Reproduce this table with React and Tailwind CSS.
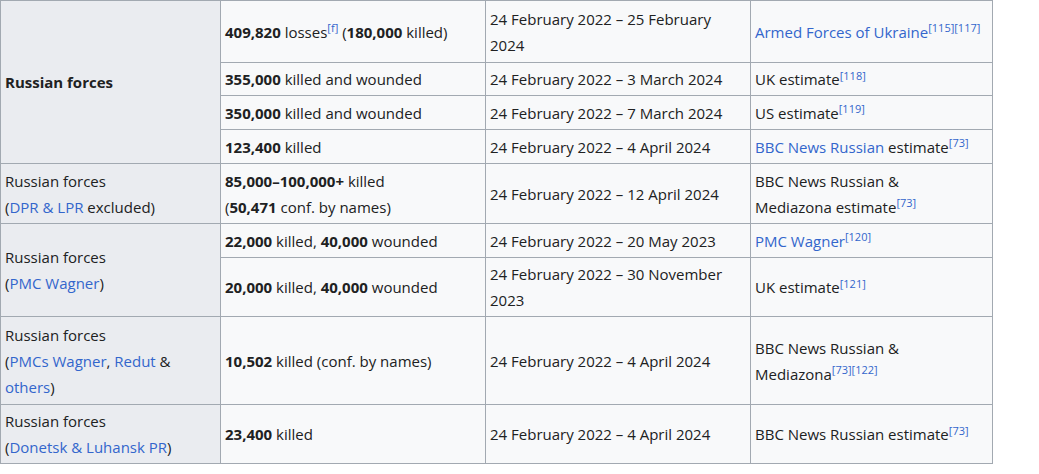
import React from 'react';

const A = ({ children }) => <span className="text-[#3366cc]">{children}</span>;
const Ref = ({ children }) => (
  <sup className="text-[11px] leading-none text-[#3366cc]">{children}</sup>
);
const B = ({ children }) => <b className="font-bold">{children}</b>;

const cell = 'border border-[#a2a9b1] px-[4px] py-0 text-left align-middle';
const th = cell + ' bg-[#eaecf0] font-normal';
const thBold = cell + ' bg-[#eaecf0] font-bold';
const td = cell + ' bg-[#f8f9fa]';

export default function App() {
  return (
    <div className="bg-white w-[1039px] h-[474px] text-[#202122] text-[15px] leading-[26px]" style={{ fontFamily: '"Open Sans", "Noto Sans", sans-serif' }}>
      <table className="border-collapse border border-[#a2a9b1] table-fixed w-[993px]">
        <colgroup>
          <col className="w-[220px]" />
          <col className="w-[265px]" />
          <col className="w-[265px]" />
          <col className="w-[242px]" />
        </colgroup>
        <tbody>
          <tr className="h-[62px]">
            <th rowSpan={4} className={thBold}>Russian forces</th>
            <td className={td}><B>409,820</B> losses<Ref>[f]</Ref> (<B>180,000</B> killed)</td>
            <td className={td}>24 February 2022 – 25 February<br />2024</td>
            <td className={td}><A>Armed Forces of Ukraine</A><Ref>[115][117]</Ref></td>
          </tr>
          <tr className="h-[33px]">
            <td className={td}><B>355,000</B> killed and wounded</td>
            <td className={td}>24 February 2022 – 3 March 2024</td>
            <td className={td}>UK estimate<Ref>[118]</Ref></td>
          </tr>
          <tr className="h-[34px]">
            <td className={td}><B>350,000</B> killed and wounded</td>
            <td className={td}>24 February 2022 – 7 March 2024</td>
            <td className={td}>US estimate<Ref>[119]</Ref></td>
          </tr>
          <tr className="h-[34px]">
            <td className={td}><B>123,400</B> killed</td>
            <td className={td}>24 February 2022 – 4 April 2024</td>
            <td className={td}><A>BBC News Russian</A> estimate<Ref>[73]</Ref></td>
          </tr>
          <tr className="h-[60px]">
            <th className={th}>Russian forces<br />(<A>DPR &amp; LPR</A> excluded)</th>
            <td className={td}><B>85,000–100,000+</B> killed<br />(<B>50,471</B> conf. by names)</td>
            <td className={td}>24 February 2022 – 12 April 2024</td>
            <td className={td}>BBC News Russian &amp;<br />Mediazona estimate<Ref>[73]</Ref></td>
          </tr>
          <tr className="h-[34px]">
            <th rowSpan={2} className={th}>Russian forces<br />(<A>PMC Wagner</A>)</th>
            <td className={td}><B>22,000</B> killed, <B>40,000</B> wounded</td>
            <td className={td}>24 February 2022 – 20 May 2023</td>
            <td className={td}><A>PMC Wagner</A><Ref>[120]</Ref></td>
          </tr>
          <tr className="h-[59px]">
            <td className={td}><B>20,000</B> killed, <B>40,000</B> wounded</td>
            <td className={td}>24 February 2022 – 30 November<br />2023</td>
            <td className={td}>UK estimate<Ref>[121]</Ref></td>
          </tr>
          <tr className="h-[88px]">
            <th className={th}>Russian forces<br />(<A>PMCs Wagner</A>, <A>Redut</A> &amp;<br /><A>others</A>)</th>
            <td className={td}><B>10,502</B> killed (conf. by names)</td>
            <td className={td}>24 February 2022 – 4 April 2024</td>
            <td className={td}>BBC News Russian &amp;<br />Mediazona<Ref>[73][122]</Ref></td>
          </tr>
          <tr className="h-[59px]">
            <th className={th}>Russian forces<br />(<A>Donetsk &amp; Luhansk PR</A>)</th>
            <td className={td}><B>23,400</B> killed</td>
            <td className={td}>24 February 2022 – 4 April 2024</td>
            <td className={td}>BBC News Russian estimate<Ref>[73]</Ref></td>
          </tr>
        </tbody>
      </table>
    </div>
  );
}
